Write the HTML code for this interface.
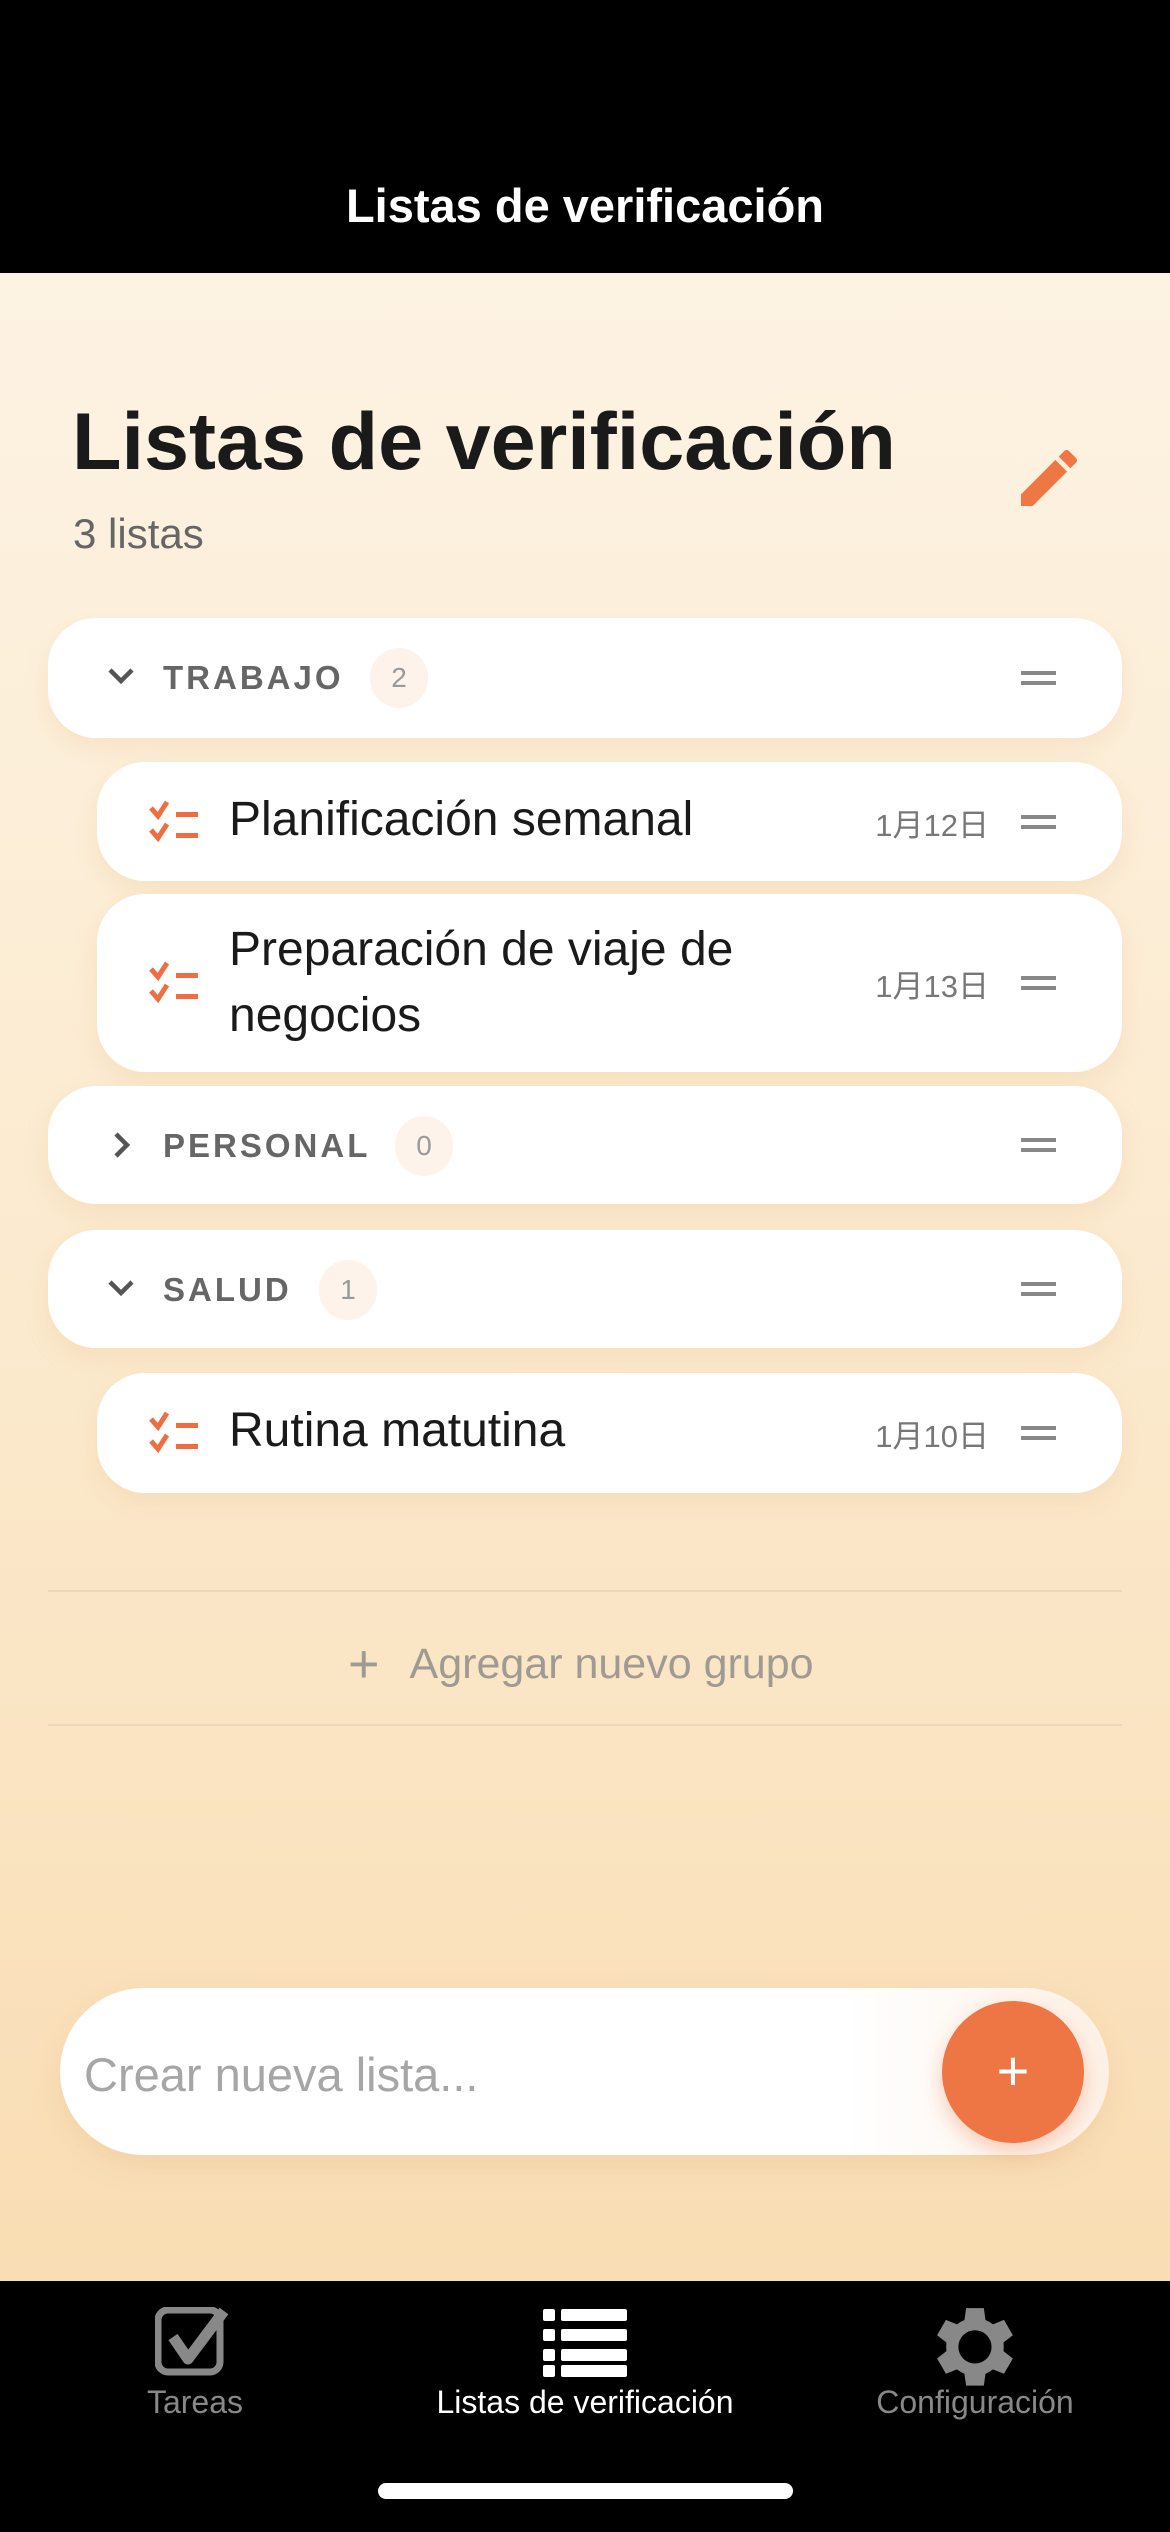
<!DOCTYPE html>
<html><head><meta charset="utf-8"><style>
*{margin:0;padding:0;box-sizing:border-box}
body{width:1170px;height:2532px;position:relative;overflow:hidden;font-family:"Liberation Sans","Noto Sans CJK JP",sans-serif;background:linear-gradient(#fdf3e3 273px,#fbe9cc 1400px,#f9ddb3 2281px)}
.a{position:absolute}
.top{left:0;top:0;width:1170px;height:273px;background:#000;color:#fff;font-size:47px;font-weight:bold;text-align:center;line-height:48px;padding-top:182px}
.card{position:absolute;background:#fff;border-radius:48px;box-shadow:0 10px 24px rgba(230,170,110,.18)}
.grp{left:48px;width:1074px;height:120px}
.itm{left:97px;width:1025px}
.gname{position:absolute;left:115px;font-size:33px;font-weight:bold;letter-spacing:3px;color:#666;top:41px}
.badge{position:absolute;top:30px;height:60px;border-radius:30px;background:#fdf3ea;color:#999;font-size:28px;line-height:60px;text-align:center;width:58px}
.drag{position:absolute;right:66px;width:35px;height:14px;border-top:4px solid #888;border-bottom:4px solid #888}
.title{position:absolute;left:132px;font-size:48px;color:#1a1a1a;line-height:66px}
.date{position:absolute;right:133px;font-size:31px;color:#777}
.chk{position:absolute;left:52px}
.tl{position:absolute;top:2384px;width:390px;text-align:center;font-size:32px;color:#888}
</style></head><body>
<div class="a top">Listas de verificación</div>
<div class="a" style="left:72px;top:396px;font-size:81px;font-weight:bold;color:#1a1a1a">Listas de verificación</div>
<div class="a" style="left:73px;top:510px;font-size:42px;color:#666">3 listas</div>
<svg class="a" style="left:1021px;top:450px" width="56" height="56" viewBox="3 3 18 18"><path fill="#ee7744" d="M3 17.25V21h3.75L17.81 9.94l-3.75-3.75L3 17.25zM20.71 7.04a1 1 0 0 0 0-1.41l-2.34-2.34a1 1 0 0 0-1.41 0l-1.83 1.83 3.75 3.75 1.83-1.83z"/></svg>

<div class="card grp" style="top:618px">
<svg class="a" style="left:58px;top:47px" width="30" height="22" viewBox="0 0 30 22"><path d="M4 5l11 11 11-11" stroke="#555" stroke-width="4.5" fill="none"/></svg>
<div class="gname">TRABAJO</div><div class="badge" style="left:322px">2</div><div class="drag" style="top:53px"></div></div>

<div class="card itm" style="top:762px;height:119px">
<svg class="chk" style="top:38px" width="52" height="44" viewBox="0 0 52 44"><path d="M2 8l7 8 9-14M2 30l7 8 9-14" stroke="#ee6e42" stroke-width="5" fill="none"/><rect x="27" y="12" width="22" height="5" fill="#ee6e42"/><rect x="27" y="33" width="22" height="5" fill="#ee6e42"/></svg>
<div class="title" style="top:25px">Planificación semanal</div><div class="date" style="top:38px">1月12日</div><div class="drag" style="top:53px"></div></div>

<div class="card itm" style="top:894px;height:178px">
<svg class="chk" style="top:67px" width="52" height="44" viewBox="0 0 52 44"><path d="M2 8l7 8 9-14M2 30l7 8 9-14" stroke="#ee6e42" stroke-width="5" fill="none"/><rect x="27" y="12" width="22" height="5" fill="#ee6e42"/><rect x="27" y="33" width="22" height="5" fill="#ee6e42"/></svg>
<div class="title" style="top:23px">Preparación de viaje de<br>negocios</div><div class="date" style="top:67px">1月13日</div><div class="drag" style="top:82px"></div></div>

<div class="card grp" style="top:1086px;height:118px">
<svg class="a" style="left:63px;top:44px" width="22" height="30" viewBox="0 0 22 30"><path d="M5 4l11 11-11 11" stroke="#555" stroke-width="4.5" fill="none"/></svg>
<div class="gname">PERSONAL</div><div class="badge" style="left:347px">0</div><div class="drag" style="top:52px"></div></div>

<div class="card grp" style="top:1230px;height:118px">
<svg class="a" style="left:58px;top:47px" width="30" height="22" viewBox="0 0 30 22"><path d="M4 5l11 11 11-11" stroke="#555" stroke-width="4.5" fill="none"/></svg>
<div class="gname">SALUD</div><div class="badge" style="left:271px">1</div><div class="drag" style="top:52px"></div></div>

<div class="card itm" style="top:1373px;height:120px">
<svg class="chk" style="top:38px" width="52" height="44" viewBox="0 0 52 44"><path d="M2 8l7 8 9-14M2 30l7 8 9-14" stroke="#ee6e42" stroke-width="5" fill="none"/><rect x="27" y="12" width="22" height="5" fill="#ee6e42"/><rect x="27" y="33" width="22" height="5" fill="#ee6e42"/></svg>
<div class="title" style="top:25px">Rutina matutina</div><div class="date" style="top:38px">1月10日</div><div class="drag" style="top:53px"></div></div>

<div class="a" style="left:48px;top:1590px;width:1074px;height:2px;background:#ead7bd"></div>
<div class="a" style="left:48px;top:1724px;width:1074px;height:2px;background:#ead7bd"></div>
<div class="a" style="left:348px;top:1629px;font-size:43px;color:#a09a94"><span style="font-size:54px;position:relative;top:4px;margin-right:30px;font-weight:300">+</span>Agregar nuevo grupo</div>

<div class="a" style="left:60px;top:1988px;width:1049px;height:167px;border-radius:84px;background:linear-gradient(90deg,#fff 75%,#fdf1e6);box-shadow:0 10px 30px rgba(220,160,100,.2)"></div>
<div class="a" style="left:84px;top:2047px;font-size:47px;color:#a6a6a6">Crear nueva lista...</div>
<div class="a" style="left:942px;top:2001px;width:142px;height:142px;border-radius:50%;background:#ee7644;box-shadow:0 8px 20px rgba(238,118,68,.35);color:#fff;font-size:56px;text-align:center;line-height:140px">+</div>

<div class="a" style="left:0;top:2281px;width:1170px;height:251px;background:#000"></div>
<svg class="a" style="left:155px;top:2307px" width="80" height="70" viewBox="0 0 80 70"><rect x="3" y="3" width="62" height="62" rx="10" fill="none" stroke="#888" stroke-width="7"/><path d="M18 30l15 22 36-48" stroke="#888" stroke-width="11" fill="none" stroke-linejoin="round"/></svg>
<svg class="a" style="left:543px;top:2309px" width="84" height="68" viewBox="0 0 84 68"><g fill="#fff"><rect x="0" y="0" width="12" height="12" rx="2"/><rect x="18" y="0" width="66" height="12" rx="2"/><rect x="0" y="20" width="12" height="12" rx="2"/><rect x="18" y="20" width="66" height="12" rx="2"/><rect x="0" y="40" width="12" height="12" rx="2"/><rect x="18" y="40" width="66" height="12" rx="2"/><rect x="0" y="56" width="12" height="12" rx="2"/><rect x="18" y="56" width="66" height="12" rx="2"/></g></svg>
<svg class="a" style="left:929px;top:2300px" width="90" height="96" viewBox="3 2 19.5 20.5"><path fill="#888" d="M19.14 12.94a7.5 7.5 0 0 0 0-1.88l2.03-1.58-1.92-3.32-2.39.96a7 7 0 0 0-1.62-.94L14.88 3.6h-3.84l-.36 2.58a7 7 0 0 0-1.62.94l-2.39-.96-1.92 3.32 2.03 1.58a7.5 7.5 0 0 0 0 1.88l-2.03 1.58 1.92 3.32 2.39-.96c.5.39 1.04.7 1.62.94l.36 2.58h3.84l.36-2.58a7 7 0 0 0 1.62-.94l2.39.96 1.92-3.32-2.03-1.58zM12.96 15.6a3.6 3.6 0 1 1 0-7.2 3.6 3.6 0 0 1 0 7.2z"/></svg>
<div class="tl" style="left:0">Tareas</div>
<div class="tl" style="left:390px;color:#fff">Listas de verificación</div>
<div class="tl" style="left:780px">Configuración</div>
<div class="a" style="left:378px;top:2483px;width:415px;height:16px;border-radius:8px;background:#fff"></div>
</body></html>
